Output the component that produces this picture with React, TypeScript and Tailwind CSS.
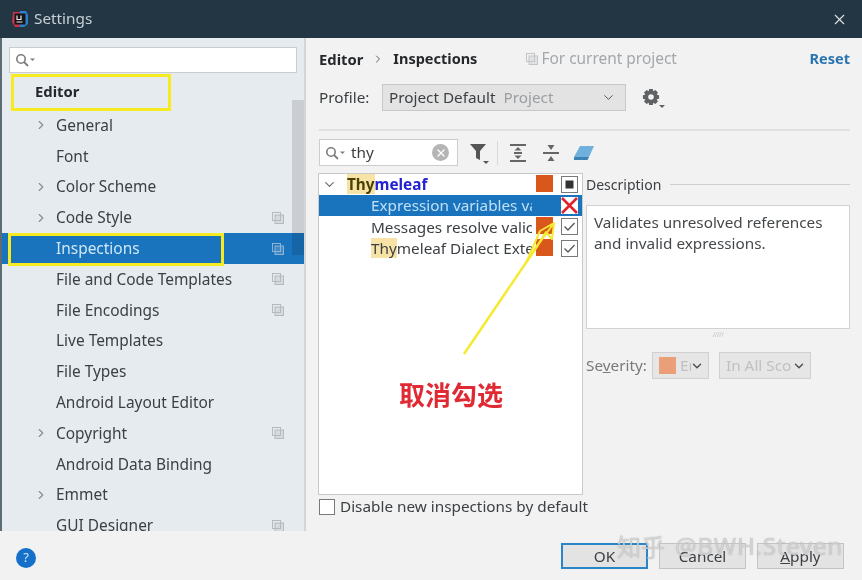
import { ChevronRight, ChevronDown, X } from 'lucide-react'

// ─── data ─────────────────────────────────────────────────────────────
const NAV = [
  { label: 'General', arrow: true },
  { label: 'Font' },
  { label: 'Color Scheme', arrow: true },
  { label: 'Code Style', arrow: true, copy: true },
  { label: 'Inspections', copy: true, selected: true },
  { label: 'File and Code Templates', copy: true },
  { label: 'File Encodings', copy: true },
  { label: 'Live Templates' },
  { label: 'File Types' },
  { label: 'Android Layout Editor' },
  { label: 'Copyright', arrow: true, copy: true },
  { label: 'Android Data Binding' },
  { label: 'Emmet', arrow: true },
  { label: 'GUI Designer', copy: true },
]

// ─── small icons ──────────────────────────────────────────────────────
function CopyIcon({ className = 'text-[#b4bac0]' }: { className?: string }) {
  return (
    <svg width="12" height="12" viewBox="0 0 12 12" fill="none" stroke="currentColor" className={className}>
      <rect x="0.5" y="0.5" width="8" height="8" fill="none" />
      <rect x="3" y="3" width="8.5" height="8.5" fill="currentColor" fillOpacity="0.35" />
    </svg>
  )
}

function SearchGlyph() {
  return (
    <svg width="22" height="14" viewBox="0 0 22 14" fill="none" className="shrink-0">
      <circle cx="6" cy="6" r="4.2" stroke="#7d7d7d" strokeWidth="1.6" />
      <path d="M9 9l4 4" stroke="#7d7d7d" strokeWidth="1.8" />
      <path d="M15 5.5h5l-2.5 2.5z" fill="#7d7d7d" />
    </svg>
  )
}

function TickBox({ mixed }: { mixed?: boolean }) {
  return (
    <svg width="17" height="17" viewBox="0 0 17 17" fill="none" className="shrink-0">
      <rect x="0.5" y="0.5" width="16" height="16" fill="#fff" stroke="#77797b" />
      {mixed ? <rect x="4.5" y="4.5" width="8" height="8" fill="#333" /> : <path d="M3.5 8.5l3.5 3.5 6.5-7" stroke="#555" strokeWidth="1.3" />}
    </svg>
  )
}

function TreeRow({ children, sel, mixed }: { children: React.ReactNode; sel?: boolean; mixed?: boolean }) {
  return (
    <div className={`flex h-[21.2px] items-center ${sel ? 'bg-[#1a74bd]' : ''}`}>
      <div className="min-w-0 flex-1 overflow-hidden whitespace-nowrap">{children}</div>
      {sel ? (
        <div className="ml-[2px] w-[17px] shrink-0" />
      ) : (
        <div className="ml-[2px] h-[21px] w-[17px] shrink-0 py-[1px]">
          <div className="h-[17px] w-[17px] bg-[#d9571b]" />
        </div>
      )}
      <div className="ml-[8px] mr-[4px] w-[17px] shrink-0">
        {sel ? (
          <svg width="17" height="17" viewBox="0 0 17 17" className="shrink-0">
            <rect x="0" y="0" width="17" height="17" fill="#fff" />
            <path d="M1 1l15 15M16 1L1 16" stroke="#e1232d" strokeWidth="2.6" />
          </svg>
        ) : (
          <TickBox mixed={mixed} />
        )}
      </div>
    </div>
  )
}

// ─── page ─────────────────────────────────────────────────────────────
export default function App() {
  return (
    <div className="relative flex h-[580px] w-[862px] flex-col overflow-hidden bg-[#f2f2f2] font-['Noto_Sans',sans-serif] text-[15.3px] text-[#3d4043] blur-[0.6px]">
      {/* title bar */}
      <div className="flex h-[38px] shrink-0 items-center bg-[#223743] pl-[10px] pr-[14px] text-[#c9d0d5]">
        <svg width="20" height="20" viewBox="0 0 20 20" className="shrink-0">
          <path d="M3 3h7v15H5l-3-5z" fill="#c2344f" />
          <path d="M10 2h6l2 4v9l-4 3h-4z" fill="#2f7fd0" />
          <rect x="4.5" y="4.5" width="11" height="11" fill="#161616" />
          <path d="M7 6.5v4h4v-4M6.5 13h6" stroke="#e8e8e8" strokeWidth="1.2" fill="none" />
        </svg>
        <span className="ml-[4px] flex-1 leading-none">Settings</span>
        <X size={17} strokeWidth={1.6} className="text-[#dfe4e7]" />
      </div>

      <div className="flex min-h-0 flex-1">
        {/* sidebar */}
        <div className="flex w-[306px] shrink-0 flex-col">
          <div className="relative flex h-[493px] flex-col overflow-hidden border-r-2 border-l-2 border-[#d3d5d7] border-l-[#5d6b75] bg-[#e6ebf0] text-[15.45px]">
            <div className="mx-[7px] mt-[9px] flex h-[26px] shrink-0 items-center border border-[#c9cdd1] bg-white pl-[5px]">
              <SearchGlyph />
            </div>
            <div className="flex h-[37px] shrink-0 items-center pl-[33px] text-[14.8px] font-bold text-[#25282b]">Editor</div>
            {NAV.map((n) => (
              <div
                key={n.label}
                className={`flex h-[30.8px] shrink-0 items-center pr-[20px] ${n.selected ? 'bg-[#1a74bd] text-[#cfe6f7]' : ''}`}
              >
                <div className="flex w-[54px] shrink-0 justify-end pr-[8px]">
                  {n.arrow && <ChevronRight size={14} strokeWidth={2} className="text-[#8a8d90]" />}
                </div>
                <span className="flex-1 whitespace-nowrap">{n.label}</span>
                {n.copy && <CopyIcon className={n.selected ? 'text-[#8eb4d3]' : 'text-[#b4bac0]'} />}
              </div>
            ))}
            {/* scrollbar */}
            <div className="absolute right-0 top-[62px] h-[155px] w-[12px] bg-black/12" />
          </div>
          {/* help */}
          <div className="flex flex-1 items-center pl-[16px] pt-[4px]">
            <div className="flex h-[20px] w-[20px] items-center justify-center rounded-full bg-[#1470c8] text-[13px] leading-none text-[#cfe4f7]">?</div>
          </div>
        </div>

        {/* right panel */}
        <div className="flex min-w-0 flex-1 flex-col pl-[13px] pr-[12px]">
          <div className="flex h-[42px] shrink-0 items-center">
            <span className="text-[14.8px] font-bold text-[#25282b]">Editor</span>
            <ChevronRight size={12} strokeWidth={2} className="mx-[9px] text-[#5a5d60]" />
            <span className="text-[14.5px] font-bold text-[#25282b]">Inspections</span>
            <span className="ml-[49px] mr-[3px]"><CopyIcon className="text-[#c2c6ca]" /></span>
            <span className="flex-1 text-[15.45px] text-[#a3a7ab]">For current project</span>
            <span className="text-[14.5px] font-bold text-[#2a74b0]">Reset</span>
          </div>

          <div className="mt-[1px] flex h-[33px] shrink-0 items-center">
            <span className="w-[63px]">Profile:</span>
            <div className="flex h-[27px] w-[244px] items-center border border-[#c8c8c8] bg-[#e3e3e3] pl-[6px] pr-[9px]">
              <span>Project Default</span>
              <span className="ml-[8px] flex-1 text-[#9b9ea1]">Project</span>
              <ChevronDown size={15} strokeWidth={1.6} className="text-[#55585b]" />
            </div>
            <svg width="24" height="22" viewBox="0 0 24 22" className="ml-[16px] mt-[3px]">
              <path d="M8 1h4l.6 2.6 2.3-1.3 2.8 2.8-1.3 2.3L19 8v4l-2.6.6 1.3 2.3-2.8 2.8-2.3-1.3L12 19H8l-.6-2.6-2.3 1.3-2.8-2.8 1.3-2.3L1 12V8l2.6-.6-1.3-2.3 2.8-2.8 2.3 1.3z" fill="#5f6265" transform="scale(0.9)" />
              <circle cx="9" cy="9" r="2.8" fill="#f2f2f2" />
              <path d="M17 17h6l-3 3z" fill="#5f6265" />
            </svg>
          </div>

          <div className="mt-[15px] h-[2px] shrink-0 bg-[#e0e0e0]" />

          {/* filter toolbar */}
          <div className="mt-[8px] flex h-[27px] shrink-0 items-center">
            <div className="flex h-[27px] w-[139px] items-center border border-[#cdcdcd] bg-white pl-[5px] pr-[8px]">
              <SearchGlyph />
              <span className="ml-[4px] flex-1">thy</span>
              <div className="flex h-[17px] w-[17px] items-center justify-center rounded-full bg-[#b5b5b5]">
                <X size={12} strokeWidth={2.6} className="text-white" />
              </div>
            </div>
            <svg width="22" height="24" viewBox="0 0 22 24" className="ml-[11px]">
              <path d="M1 3h16l-6 7v9l-4-2v-7z" fill="#555" />
              <path d="M14 20h6l-3 3z" fill="#555" />
            </svg>
            <div className="ml-[6px] h-[24px] w-px bg-[#d8d8d8]" />
            <svg width="18" height="20" viewBox="0 0 18 20" className="ml-[11px]" fill="#666">
              <rect x="1" y="1" width="16" height="2" />
              <rect x="1" y="17" width="16" height="2" />
              <rect x="5" y="9" width="8" height="2" />
              <path d="M9 4l3.5 3.5h-7zM9 16l3.5-3.5h-7z" />
            </svg>
            <svg width="18" height="20" viewBox="0 0 18 20" className="ml-[15px]" fill="#666">
              <rect x="1" y="9" width="16" height="2" />
              <path d="M5.5 2h7L9 7zM5.5 18h7L9 13z" />
            </svg>
            <svg width="22" height="20" viewBox="0 0 22 20" className="ml-[13px]">
              <path d="M7 3h14l-5 11H1z" fill="#6fb1dc" />
              <path d="M1 14h15l-1.5 3H1z" fill="#3d82b5" />
            </svg>
          </div>

          {/* tree + description */}
          <div className="mt-[7px] flex h-[322px] shrink-0">
            <div className="ml-[-1px] w-[265px] shrink-0 border border-[#c9c9c9] bg-white">
              <TreeRow mixed>
                <div className="flex items-center">
                  <ChevronDown size={15} strokeWidth={1.8} className="ml-[3px] mr-[10px] text-[#66696c]" />
                  <span className="font-bold text-[#2222d0]">
                    <span className="bg-[#f7e3a6] text-[#4a4000]">Thy</span>meleaf
                  </span>
                </div>
              </TreeRow>
              <TreeRow sel>
                <span className="ml-[52px] block w-[161px] overflow-hidden text-[#bfe0f8]">Expression variables va</span>
              </TreeRow>
              <TreeRow>
                <span className="ml-[52px] block w-[161px] overflow-hidden">Messages resolve valic</span>
              </TreeRow>
              <TreeRow>
                <span className="ml-[52px] block w-[161px] overflow-hidden">
                  <span className="bg-[#f7e3a6]">Thy</span>meleaf Dialect Exte
                </span>
              </TreeRow>
            </div>

            <div className="ml-[3px] flex min-w-0 flex-1 flex-col">
              <div className="flex h-[22px] shrink-0 items-center text-[14px]">
                <span>Description</span>
                <div className="ml-[9px] h-px flex-1 bg-[#cfcfcf]" />
              </div>
              <div className="mt-[10px] h-[124px] shrink-0 border border-[#d2d2d2] bg-white px-[7px] py-[6px] leading-[21px] text-[#45484b]">
                Validates unresolved references
                <br />
                and invalid expressions.
              </div>
              <div className="mt-[2px] flex h-[8px] shrink-0 justify-center text-[7px] leading-[8px] tracking-[-0.5px] text-[#c6c6c6]">/////</div>
              <div className="mt-[13px] flex h-[27px] shrink-0 items-center text-[#77797b]">
                <span className="w-[66px]">
                  Se<span className="underline">v</span>erity:
                </span>
                <div className="flex h-[27px] w-[57px] items-center border border-[#d0d0d0] bg-[#e6e6e6] pl-[6px] pr-[2px]">
                  <div className="h-[17px] w-[17px] shrink-0 bg-[#ea9f79]" />
                  <span className="ml-[4px] w-[11px] overflow-hidden text-[#c0c0c0]">Er</span>
                  <ChevronDown size={14} strokeWidth={2.4} className="ml-[-1px] shrink-0 text-[#4c4c4c]" />
                </div>
                <div className="ml-[10px] flex h-[27px] w-[92px] items-center border border-[#d0d0d0] bg-[#e6e6e6] pl-[6px] pr-[2px]">
                  <span className="w-[66px] overflow-hidden whitespace-nowrap text-[#c0c0c0]">In All Sco</span>
                  <ChevronDown size={14} strokeWidth={2.4} className="shrink-0 text-[#4c4c4c]" />
                </div>
              </div>
            </div>
          </div>

          <label className="mt-[3px] flex h-[17px] shrink-0 items-center">
            <div className="h-[16px] w-[16px] border border-[#77797b] bg-white" />
            <span className="ml-[5px]">Disable new inspections by default</span>
          </label>

          {/* buttons */}
          <div className="mt-[28px] flex h-[26px] shrink-0 justify-end gap-[11px] pr-[6px]">
            <div className="flex h-[26px] w-[87px] items-center justify-center border-2 border-[#2a86c8] bg-[#e3e3e3]">OK</div>
            <div className="flex h-[26px] w-[87px] items-center justify-center border border-[#c4c4c4] bg-[#e3e3e3]">Cancel</div>
            <div className="flex h-[26px] w-[87px] items-center justify-center border border-[#c4c4c4] bg-[#e3e3e3]">
              <span className="underline">A</span>pply
            </div>
          </div>
        </div>
      </div>

      {/* annotations over the screenshot */}
      <div className="absolute left-[11px] top-[74px] h-[37px] w-[160px] border-[3px] border-[#f6ea20]" />
      <div className="absolute left-[8px] top-[233px] h-[33px] w-[216px] border-[3px] border-[#f6ea20]" />
      <svg width="120" height="160" viewBox="0 0 120 160" fill="none" className="absolute left-[450px] top-[205px]">
        <path d="M14 149L88 40" stroke="#f6ea30" strokeWidth="2.5" />
        <path d="M88 40L104 18 102 34 96 27 76 58 90 26 104 18" stroke="#f6ea30" strokeWidth="2" strokeLinejoin="round" fill="none" />
      </svg>
      <div className="absolute left-[399px] top-[378px] font-['Noto_Sans_CJK_SC',sans-serif] text-[26px] leading-[32px] font-bold text-[#e02a33]">取消勾选</div>
      <div className="absolute left-[617px] top-[530px] flex whitespace-nowrap font-['Noto_Sans','Noto_Sans_CJK_SC',sans-serif] text-[24px] leading-[32px] text-white/60 [text-shadow:0_0_1px_rgba(90,90,90,0.7)]">
        <span className="font-['Noto_Sans_CJK_SC',sans-serif]">知乎</span>
        <span className="ml-[10px] tracking-[0.8px]">@BWH.Steven</span>
      </div>
    </div>
  )
}
